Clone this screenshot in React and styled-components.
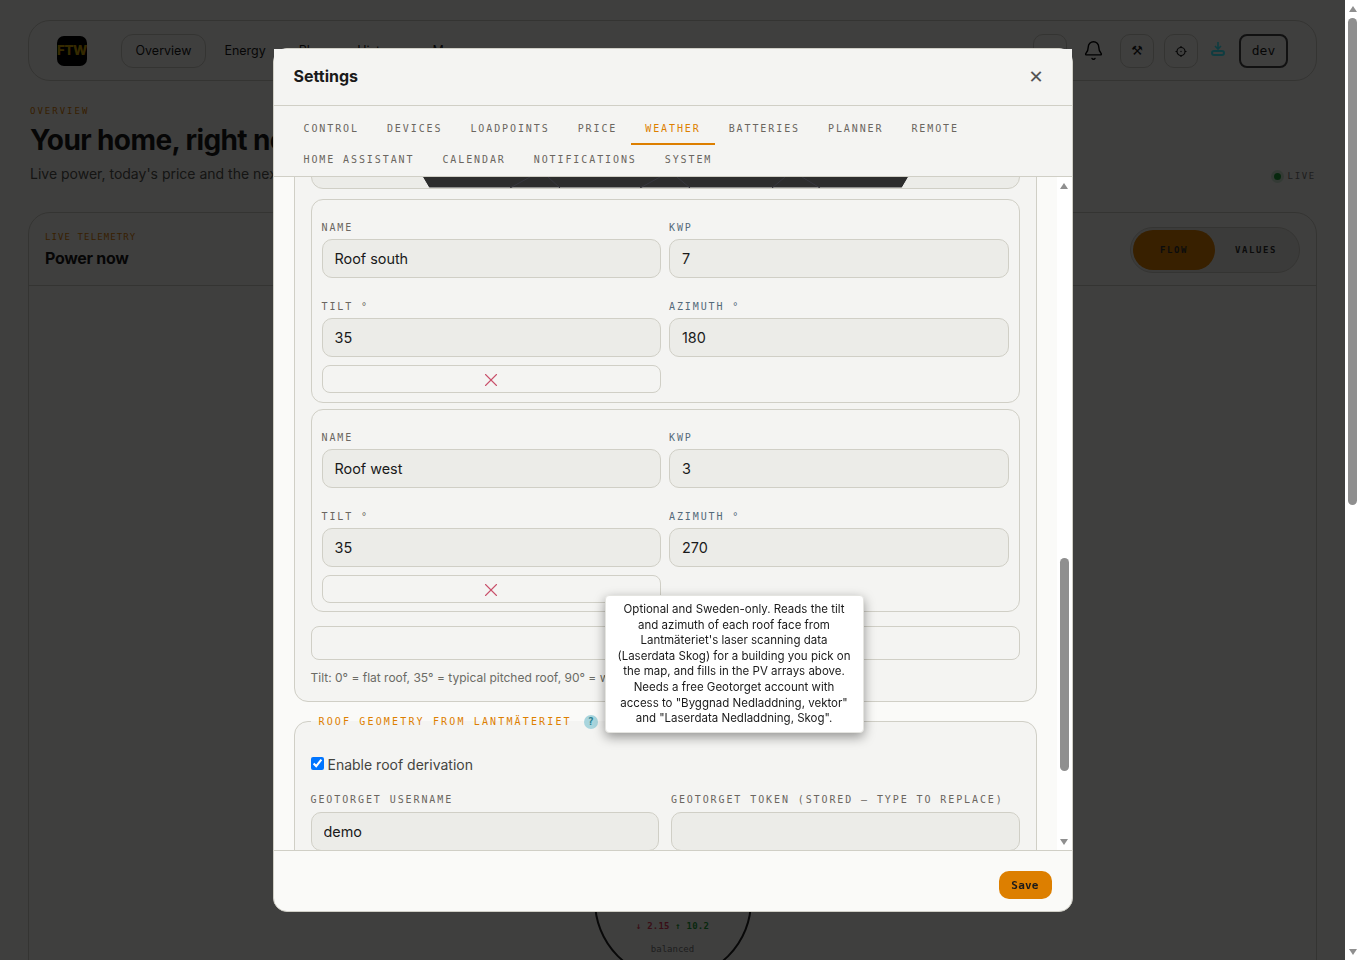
import React, { useLayoutEffect, useRef } from "react";
import styled, { createGlobalStyle } from "styled-components";
import { Bell, X } from "lucide-react";

const mono = `"DejaVu Sans Mono", "Liberation Mono", monospace`;

const GlobalStyle = createGlobalStyle`
  html, body {
    margin: 0;
    background: #fafaf8;
    color: #1a1a1a;
    font-family: Inter, "Noto Sans", sans-serif;
  }
  * { box-sizing: border-box; }
`;

const Page = styled.div`
  margin-right: 15px;
  padding: 20px 28px 40px;
  height: 1821px;
`;

const Nav = styled.nav`
  display: flex;
  align-items: center;
  height: 61px;
  padding: 0 28px;
  border: 1px solid #d0cfc6;
  border-radius: 22px;
`;

const Logo = styled.div`
  width: 30px;
  height: 30px;
  border-radius: 7px;
  background: #000;
  color: #d4a800;
  display: flex;
  align-items: center;
  justify-content: center;
  font: 800 13.5px/1 Inter, sans-serif;
  letter-spacing: -0.5px;
  margin-right: 34px;
`;

const NavLink = styled.a`
  padding: 7px 13.5px;
  margin-right: 4px;
  font-size: 12.5px;
  line-height: 18px;
  border: 1px solid ${(p) => (p.$active ? "#d0cfc6" : "transparent")};
  border-radius: 12px;
  color: #1a1a1a;
`;

const NavRight = styled.div`
  margin-left: auto;
  display: flex;
  align-items: center;
  gap: 10px;
`;

const IconBtn = styled.button`
  display: flex;
  align-items: center;
  justify-content: center;
  width: 34px;
  height: 34px;
  padding: 0;
  background: transparent;
  border: 1px solid #d0cfc6;
  border-radius: 10px;
  font-size: 13px;
  color: #1a1a1a;
  font-family: "DejaVu Sans", sans-serif;
`;

const PlainIcon = styled.span`
  display: flex;
  margin: ${(p) => p.$margin || 0};
  color: ${(p) => p.$color || "#000"};
`;

const DevBtn = styled.button`
  width: 49px;
  height: 34px;
  background: transparent;
  border: 2px solid #444;
  border-radius: 8px;
  font: 13px ${mono};
  color: #1a1a1a;
  padding: 0;
`;

const Intro = styled.header`
  position: relative;
  padding: 24px 2px 0;
  height: 131px;
`;

const Eyebrow = styled.div`
  font: 9px/12px ${mono};
  letter-spacing: ${(p) => p.$spacing || "2px"};
  color: #dd7f00;
`;

const Heading = styled.h1`
  margin: 4px 0 0;
  font-size: 28px;
  line-height: 38px;
  font-weight: 700;
  letter-spacing: -0.6px;
`;

const Lead = styled.p`
  margin: 6px 0 0;
  font-size: 14px;
  color: #55554f;
`;

const LiveTag = styled.div`
  position: absolute;
  right: 1px;
  bottom: 30px;
  display: flex;
  align-items: center;
  gap: 7px;
  font: 9px/12px ${mono};
  letter-spacing: 1.7px;
  color: #777;
`;

const LiveDot = styled.i`
  width: 7px;
  height: 7px;
  border-radius: 50%;
  background: #1fa13a;
  box-shadow: 0 0 0 3px rgba(31, 161, 58, 0.2);
`;

const PowerCard = styled.section`
  border: 1px solid #d0cfc6;
  border-radius: 22px;
  height: 1400px;
`;

const PowerHead = styled.div`
  display: flex;
  align-items: center;
  justify-content: space-between;
  height: 73px;
  padding: 2px 16px 0;
  border-bottom: 1px solid #d0cfc6;
`;

const PowerTitle = styled.h2`
  margin: 4px 0 0;
  font-size: 16px;
  line-height: 22px;
  font-weight: 700;
  letter-spacing: -0.3px;
`;

const Toggle = styled.div`
  display: flex;
  width: 170px;
  height: 46px;
  padding: 2px;
  border: 1px solid #d0cfc6;
  border-radius: 23px;
  background: #ecece8;
`;

const ToggleItem = styled.div`
  flex: 1;
  display: flex;
  align-items: center;
  justify-content: center;
  border-radius: 20px;
  font: 700 9px ${mono};
  letter-spacing: 1.6px;
  color: #333;
  background: ${(p) => (p.$active ? "#dd7f00" : "transparent")};
`;

const Hub = styled.div`
  width: 158px;
  height: 158px;
  margin: 536px auto 0;
  border: 2px solid #222;
  border-radius: 50%;
  display: flex;
  flex-direction: column;
  align-items: center;
  justify-content: flex-end;
  padding-bottom: 24px;
  font: 9px ${mono};
`;

const HubFlow = styled.div`
  font-weight: 700;
  letter-spacing: 0.2px;
  margin-bottom: 13px;
`;

const Tone = styled.span`
  color: ${(p) => p.$color};
`;

const Overlay = styled.div`
  position: fixed;
  top: 0;
  left: 0;
  right: 15px;
  bottom: 0;
  background: rgba(0, 0, 0, 0.75);
  display: flex;
  align-items: center;
  justify-content: center;
`;

/* scrollbars are drawn: the browser that takes the photo hides native ones */
const Rail = styled.div`
  display: flex;
  flex-direction: column;
  align-items: center;
  flex: none;
  width: 15px;
  background: #fff;
`;

const PageRail = styled(Rail)`
  position: fixed;
  top: 0;
  right: 0;
  bottom: 0;
`;

const RailButton = styled.div`
  display: flex;
  align-items: center;
  justify-content: center;
  flex: none;
  height: 17px;

  &::before {
    content: "";
    border-left: 4.5px solid transparent;
    border-right: 4.5px solid transparent;
    border-${(p) => (p.$down ? "top" : "bottom")}: 6px solid #8f8f8f;
  }
`;

const RailTrack = styled.div`
  flex: 1;
  min-height: 0;
`;

const RailThumb = styled.div`
  width: 9px;
  margin-top: ${(p) => p.$offset}px;
  height: ${(p) => p.$size}px;
  background: #8f8f8f;
  border-radius: 5px;
`;

const Modal = styled.div`
  position: relative;
  display: flex;
  flex-direction: column;
  width: 800px;
  height: 864px;
  background: #fafaf8;
  border: 1px solid #d0cfc6;
  border-radius: 14px;
`;

const ModalHead = styled.div`
  display: flex;
  align-items: center;
  justify-content: space-between;
  height: 57px;
  flex: none;
  padding: 0 28px 2px 20px;
  background: #f4f4f2;
  border-bottom: 1px solid #d0cfc6;
`;

const ModalTitle = styled.h2`
  margin: 0;
  font-size: 16px;
  font-weight: 700;
`;

const CloseBtn = styled.button`
  padding: 0;
  background: none;
  border: 0;
  font: 700 18px "DejaVu Sans", sans-serif;
  color: #555;
`;

const Tabs = styled.div`
  display: flex;
  flex-wrap: wrap;
  flex: none;
  padding: 8px 16px 0;
  background: #f4f4f2;
  border-bottom: 1px solid #d0cfc6;
`;

const Tab = styled.button`
  height: 31px;
  padding: 0 14px;
  background: none;
  border: 0;
  border-bottom: 2px solid ${(p) => (p.$active ? "#dd7f00" : "transparent")};
  font: 10px ${mono};
  letter-spacing: 1.9px;
  color: ${(p) => (p.$active ? "#dd7f00" : "#6b6660")};
`;

const ModalMain = styled.div`
  display: flex;
  flex: 1;
  min-height: 0;
`;

const ModalBody = styled.div`
  flex: 1;
  min-width: 0;
  overflow: hidden;
  padding: 20px;
`;

const Group = styled.fieldset`
  margin: 0 0 13px;
  min-width: 0;
  padding: 16px 16px 15px;
  background: #f4f4f2;
  border: 1px solid #d0cfc6;
  border-radius: 14px;
`;

const GroupTitle = styled.legend`
  display: flex;
  align-items: center;
  gap: 12px;
  padding: 0 8px;
  font: 10px/14px ${mono};
  letter-spacing: 2.15px;
  color: #dd7f00;
`;

const Help = styled.span`
  width: 14px;
  height: 14px;
  border-radius: 50%;
  background: #a8d5dd;
  color: #2a7f8f;
  display: flex;
  align-items: center;
  justify-content: center;
  font: 700 10px ${mono};
  letter-spacing: 0;
`;

const MapPanel = styled.div`
  height: 760px;
  background: #ecece8;
  border: 1px solid #d0cfc6;
  border-radius: 12px;
  margin-bottom: 10px;
  overflow: hidden;

  svg {
    display: block;
  }
`;

const ArrayCard = styled.div`
  display: grid;
  grid-template-columns: 1fr 1fr;
  gap: 8px;
  padding: 7px 10px 8.6px;
  margin-bottom: 6px;
  border: 1px solid #d0cfc6;
  border-radius: 12px;
`;

const Field = styled.label`
  display: block;
  min-width: 0;
`;

const FieldLabel = styled.span`
  display: block;
  margin: 15px 0 5px;
  font: 10px/12px ${mono};
  letter-spacing: 1.9px;
  color: ${(p) => (p.$blue ? "#556a7a" : "#6b6660")};
  text-transform: uppercase;
`;

const Input = styled.input`
  display: block;
  width: 100%;
  height: 39px;
  padding: 0 12px;
  background: #ecece8;
  border: 1px solid #d0cfc6;
  border-radius: 10px;
  font: 14.4px Inter, sans-serif;
  color: #1a1a1a;
`;

const RemoveBtn = styled.button`
  display: flex;
  align-items: center;
  justify-content: center;
  height: 28px;
  padding: 2px 0 0;
  background: #f4f4f2;
  border: 1px solid #d0cfc6;
  border-radius: 8px;
  color: #c9506a;
`;

const AddBtn = styled.button`
  display: block;
  width: 100%;
  height: 34px;
  margin-top: 13.8px;
  background: #f4f4f2;
  border: 1px solid #d0cfc6;
  border-radius: 8px;
`;

const Hint = styled.p`
  margin: 10px 0 0;
  font-size: 12px;
  line-height: 16px;
  color: #6b6b65;
`;

const CheckRow = styled.label`
  display: flex;
  align-items: center;
  gap: 4px;
  margin-top: 11px;
  font-size: 14px;
  color: #44443f;

  input {
    margin: -2px 0 0;
    width: 13px;
    height: 13px;
  }
`;

const TwoCol = styled.div`
  display: grid;
  grid-template-columns: 1fr 1fr;
  gap: 12px;
  margin-top: 9px;
`;

const TokenLabel = styled(FieldLabel)`
  margin: 12px 0 6px;
`;

const Later = styled.div`
  height: 170px;
`;

const ModalFoot = styled.div`
  display: flex;
  align-items: flex-start;
  justify-content: flex-end;
  flex: none;
  height: 61px;
  padding: 20px 20px 0;
  border-top: 1px solid #d0cfc6;
`;

const SaveBtn = styled.button`
  width: 53px;
  height: 28px;
  padding: 0;
  background: #dd7f00;
  border: 0;
  border-radius: 10px;
  font: 700 11px ${mono};
  letter-spacing: 0.2px;
  color: #1a1a1a;
`;

const Tooltip = styled.div`
  position: absolute;
  left: 331px;
  top: 546px;
  width: 259px;
  padding: 6px 10.5px 5px;
  background: #fff;
  border: 1px solid #e4e4e0;
  border-radius: 4px;
  box-shadow: 0 4px 12px rgba(0, 0, 0, 0.4);
  font-size: 11.5px;
  line-height: 15.6px;
  text-align: center;
  color: #1a1a1a;
`;

const tabs = ["Control", "Devices", "Loadpoints", "Price", "Weather", "Batteries", "Planner", "Remote", "Home Assistant", "Calendar", "Notifications", "System"];

const arrays = [
  { name: "Roof south", kwp: "7", tilt: "35", azimuth: "180" },
  { name: "Roof west", kwp: "3", tilt: "35", azimuth: "270" },
];

const RoofMap = () => (
  <svg width="707" height="758" viewBox="0 0 707 758">
    <polygon points="117,758 590,758 707,560 707,0 0,0 0,560" fill="#2d2d2d" stroke="#f4f4f2" />
    <g stroke="#37373f" strokeWidth="1">
      <line x1="198" y1="758" x2="218" y2="747" />
      <line x1="248" y1="758" x2="236" y2="747" />
      <line x1="328" y1="758" x2="348" y2="747" />
      <line x1="378" y1="758" x2="365" y2="747" />
      <line x1="460" y1="758" x2="473" y2="747" />
      <line x1="508" y1="758" x2="490" y2="747" />
    </g>
  </svg>
);

const DownloadIcon = () => (
  <svg width="16" height="16" viewBox="0 0 16 16" fill="none" stroke="currentColor">
    <path d="M8 1v6.5M5 5l3 3 3-3" strokeWidth="1.6" />
    <rect x="2" y="10" width="12" height="4" rx="2" strokeWidth="2" />
  </svg>
);

const GearIcon = () => (
  <svg width="14" height="14" viewBox="0 0 14 14" fill="none" stroke="currentColor" strokeWidth="1.2">
    <circle cx="7" cy="7.5" r="4" />
    <circle cx="7" cy="7.5" r="0.7" fill="currentColor" stroke="none" />
    <path d="M7 2v1.5M7 11.5V13M1.5 7.5H3M11 7.5h1.5" />
  </svg>
);

const ArrayFields = ({ item }) => (
  <ArrayCard>
    <Field>
      <FieldLabel>Name</FieldLabel>
      <Input readOnly value={item.name} />
    </Field>
    <Field>
      <FieldLabel $blue>kWp</FieldLabel>
      <Input readOnly value={item.kwp} />
    </Field>
    <Field>
      <FieldLabel>Tilt °</FieldLabel>
      <Input readOnly value={item.tilt} />
    </Field>
    <Field>
      <FieldLabel $blue>Azimuth °</FieldLabel>
      <Input readOnly value={item.azimuth} />
    </Field>
    <RemoveBtn><X size={22} strokeWidth={1.2} /></RemoveBtn>
  </ArrayCard>
);

const Scrollbar = ({ offset, size }) => (
  <>
    <RailButton />
    <RailTrack>
      <RailThumb $offset={offset} $size={size} />
    </RailTrack>
    <RailButton $down />
  </>
);

export default function App() {
  const bodyRef = useRef(null);
  const mapRef = useRef(null);

  // the settings body opens scrolled down to the PV arrays
  useLayoutEffect(() => {
    const body = bodyRef.current;
    const offset = mapRef.current.getBoundingClientRect().bottom - body.getBoundingClientRect().top;
    body.scrollTop = offset - 12;
  }, []);

  return (
    <>
      <GlobalStyle />
      <Page>
        <Nav>
          <Logo>FTW</Logo>
          <NavLink $active>Overview</NavLink>
          <NavLink>Energy</NavLink>
          <NavLink>Plan</NavLink>
          <NavLink>History</NavLink>
          <NavLink>More</NavLink>
          <NavRight>
            <IconBtn />
            <PlainIcon $margin="0 6px"><Bell size={21} strokeWidth={1.6} /></PlainIcon>
            <IconBtn>⚒</IconBtn>
            <IconBtn><GearIcon /></IconBtn>
            <PlainIcon $color="#3cf0ff" $margin="0 3px 4px 2px"><DownloadIcon /></PlainIcon>
            <DevBtn>dev</DevBtn>
          </NavRight>
        </Nav>
        <Intro>
          <Eyebrow>OVERVIEW</Eyebrow>
          <Heading>Your home, right now</Heading>
          <Lead>Live power, today's price and the next few hours at a glance.</Lead>
          <LiveTag><LiveDot />LIVE</LiveTag>
        </Intro>
        <PowerCard>
          <PowerHead>
            <div>
              <Eyebrow $spacing="1.1px">LIVE TELEMETRY</Eyebrow>
              <PowerTitle>Power now</PowerTitle>
            </div>
            <Toggle>
              <ToggleItem $active>FLOW</ToggleItem>
              <ToggleItem>VALUES</ToggleItem>
            </Toggle>
          </PowerHead>
          <Hub>
            <HubFlow>
              <Tone $color="#e23a5a">↓ 2.15</Tone> <Tone $color="#1fa13a">↑ 10.2</Tone>
            </HubFlow>
            <Tone $color="#777">balanced</Tone>
          </Hub>
        </PowerCard>
      </Page>

      <Overlay>
        <Modal>
          <ModalHead>
            <ModalTitle>Settings</ModalTitle>
            <CloseBtn>✕</CloseBtn>
          </ModalHead>
          <Tabs>
            {tabs.map((t) => (
              <Tab key={t} $active={t === "Weather"}>{t.toUpperCase()}</Tab>
            ))}
          </Tabs>
          <ModalMain>
            <ModalBody ref={bodyRef}>
              <Group>
                <MapPanel ref={mapRef}><RoofMap /></MapPanel>
                {arrays.map((a) => (
                  <ArrayFields key={a.name} item={a} />
                ))}
                <AddBtn />
                <Hint>Tilt: 0° = flat roof, 35° = typical pitched roof, 90° = wall-mounted panels.</Hint>
              </Group>
              <Group>
                <GroupTitle>
                  ROOF GEOMETRY FROM LANTMÄTERIET
                  <Help>?</Help>
                </GroupTitle>
                <CheckRow>
                  <input type="checkbox" defaultChecked />
                  Enable roof derivation
                </CheckRow>
                <TwoCol>
                  <Field>
                    <TokenLabel>Geotorget username</TokenLabel>
                    <Input readOnly value="demo" />
                  </Field>
                  <Field>
                    <TokenLabel>Geotorget token (stored — type to replace)</TokenLabel>
                    <Input readOnly value="" />
                  </Field>
                </TwoCol>
                <Later />
              </Group>
            </ModalBody>
            <Rail><Scrollbar offset={364} size={213} /></Rail>
          </ModalMain>
          <ModalFoot>
            <SaveBtn>Save</SaveBtn>
          </ModalFoot>
          <Tooltip>
            Optional and Sweden-only. Reads the tilt and azimuth of each roof face from Lantmäteriet's laser scanning data (Laserdata Skog) for a building you pick on the map, and fills in the PV arrays above. Needs a free Geotorget account with access to "Byggnad Nedladdning, vektor" and "Laserdata Nedladdning, Skog".
          </Tooltip>
        </Modal>
      </Overlay>
      <PageRail><Scrollbar offset={1} size={487} /></PageRail>
    </>
  );
}
